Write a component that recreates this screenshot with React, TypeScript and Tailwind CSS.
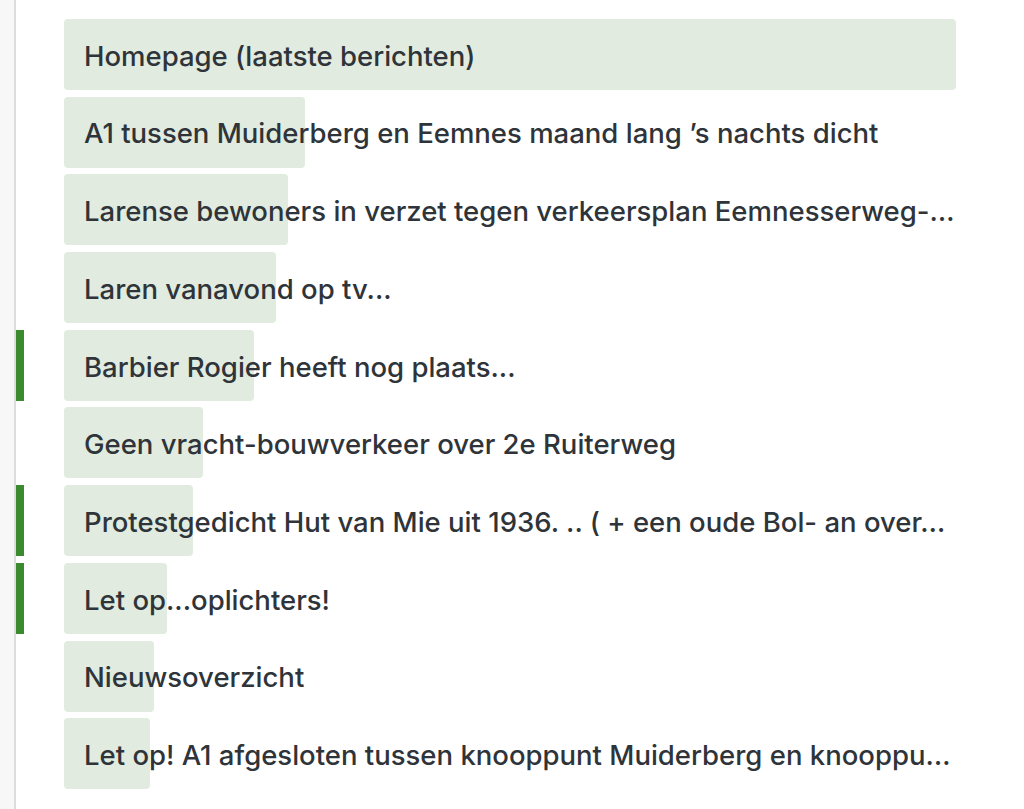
const items = [
  { title: "Homepage (laatste berichten)", fill: 892, marked: false },
  { title: "A1 tussen Muiderberg en Eemnes maand lang ’s nachts dicht", fill: 241, marked: false },
  { title: "Larense bewoners in verzet tegen verkeersplan Eemnesserweg-…", fill: 224, marked: false },
  { title: "Laren vanavond op tv...", fill: 212, marked: false },
  { title: "Barbier Rogier heeft nog plaats...", fill: 190, marked: true },
  { title: "Geen vracht-bouwverkeer over 2e Ruiterweg", fill: 139, marked: false },
  { title: "Protestgedicht Hut van Mie uit 1936. .. ( + een oude Bol- an over…", fill: 129, marked: true },
  { title: "Let op...oplichters!", fill: 103, marked: true },
  { title: "Nieuwsoverzicht", fill: 90, marked: false },
  { title: "Let op! A1 afgesloten tussen knooppunt Muiderberg en knooppu…", fill: 86, marked: false },
]

export default function App() {
  return (
    <div className="flex min-h-screen bg-white font-['Inter',sans-serif] text-[#2e3439]">
      {/* left rail */}
      <div className="w-[16px] shrink-0 bg-[#f7f7f7] border-r-2 border-[#dcdcdc]" />

      <ul className="flex flex-col gap-[6.7px] pt-[19px]">
        {items.map((item) => (
          <li key={item.title} className="flex h-[71px]">
            <div className={`w-2 shrink-0 ${item.marked ? "bg-[#3c8a2e]" : ""}`} />
            <a href="#" className="relative ml-10 flex w-[892px] items-center">
              <span
                className="absolute inset-y-0 left-0 rounded-[4px] bg-[#e1ebdf]"
                style={{ width: item.fill }}
              />
              <span className="relative whitespace-nowrap pl-5 pt-[3px] text-[27.5px] font-medium leading-[1.4]">
                {item.title}
              </span>
            </a>
          </li>
        ))}
      </ul>
    </div>
  )
}
